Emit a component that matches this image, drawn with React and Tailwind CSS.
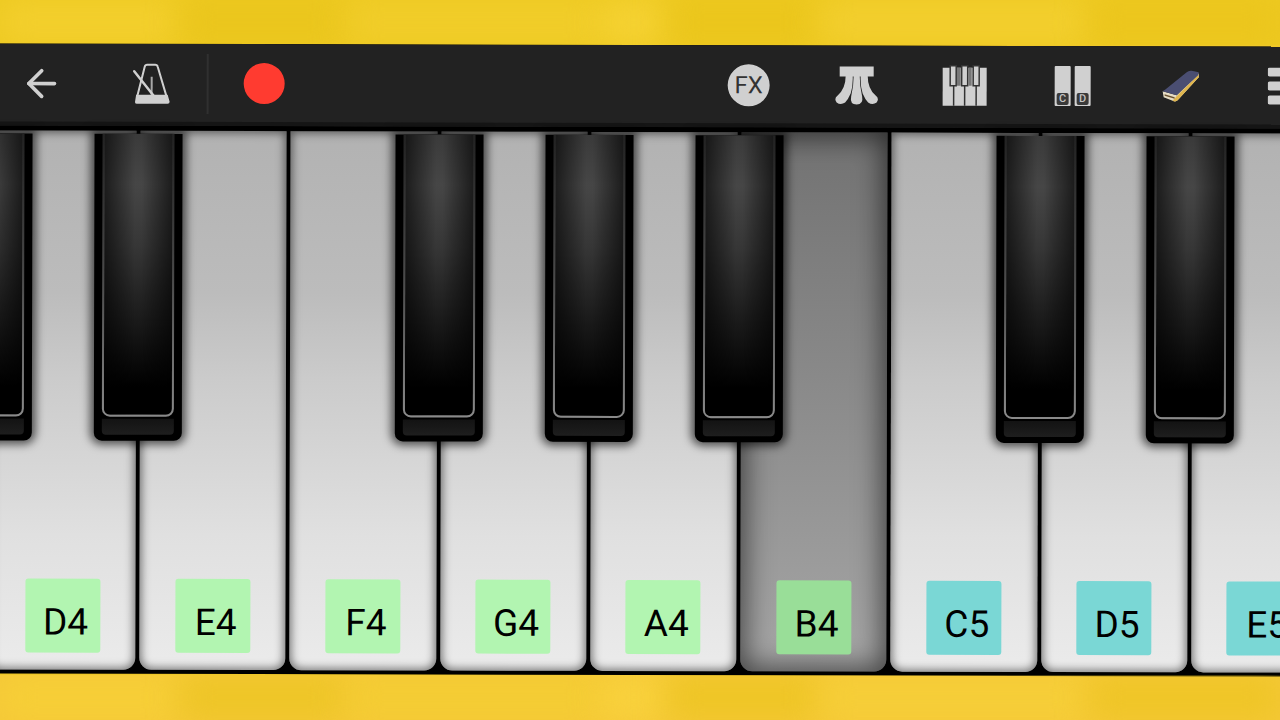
import { useState } from 'react';
import { ArrowLeft } from 'lucide-react';

const KEYS = [
  { note: 'D4', octave: 4, sharp: 'D#4' },
  { note: 'E4', octave: 4 },
  { note: 'F4', octave: 4, sharp: 'F#4' },
  { note: 'G4', octave: 4, sharp: 'G#4' },
  { note: 'A4', octave: 4, sharp: 'A#4' },
  { note: 'B4', octave: 4 },
  { note: 'C5', octave: 5, sharp: 'C#5' },
  { note: 'D5', octave: 5, sharp: 'D#5' },
  { note: 'E5', octave: 5 },
];

const MetronomeIcon = () => (
  <svg viewBox="0 0 38 42" className="h-[42px] w-[38px]" fill="none" stroke="#d0d0d0">
    <path d="M4.500 34 L12 4 Q12.500 2 14.500 2 H22.500 Q24.500 2 25 4 L34 34" strokeWidth="2" />
    <path d="M3.500 32 H35 L37 39 Q37 41 35 41 H4 Q2 41 2.400 39 Z" fill="#d0d0d0" stroke="none" />
    <path d="M19 14 V32" strokeWidth="2" stroke="#a8a8a8" />
    <path d="M1.500 8.500 L21 33" strokeWidth="2.500" strokeLinecap="round" />
  </svg>
);

const PedalIcon = () => (
  <svg viewBox="0 0 44 40" className="h-10 w-11" fill="#d0d0d0">
    <path d="M5 1 H39 V11 H5 Z" />
    <path d="M11 10 H18 Q18.500 20 16 28 Q13.500 34 10.500 37 Q6 40 2 37 Q-1 33 3 30 Q11 23 11 10 Z" />
    <path d="M33 10 H26 Q25.500 20 28 28 Q30.500 34 33.500 37 Q38 40 42 37 Q45 33 41 30 Q33 23 33 10 Z" />
    <path d="M19 10 H25 Q25 20 27.500 31 Q29 39 22 39 Q15 39 16.500 31 Q19 20 19 10 Z" />
  </svg>
);

const KeyboardIcon = () => (
  <svg viewBox="0 0 46 42" className="h-[42px] w-[46px]">
    <path fill="#d0d0d0" d="M1 3 H45 V41 H1 Z" />
    <path stroke="#333" strokeWidth="1.500" d="M12 20 V41 M23 20 V41 M34.500 20 V41" />
    <path fill="#777" d="M15 3 H19 V21 H15 Z M27 3 H30 V21 H27 Z" />
    <path
      fill="#d0d0d0"
      stroke="#333"
      strokeWidth="1.500"
      d="M8.500 1 H14.500 V21 H8.500 Z M20 1 H26 V21 H20 Z M31.500 1 H37.500 V21 H31.500 Z"
    />
  </svg>
);

const NoteNamesIcon = () => (
  <span className="flex gap-1">
    {['C', 'D'].map((letter) => (
      <span key={letter} className="flex h-10 w-4 items-end justify-center rounded-[1px] bg-[#d0d0d0] pb-px">
        <span className="flex h-3 w-3 items-center justify-center rounded-[2px] bg-[#3a3a3a] text-[11px] font-medium leading-none text-[#c4c4c4]">
          {letter}
        </span>
      </span>
    ))}
  </span>
);

const HarmonicaIcon = () => (
  <svg viewBox="0 0 40 34" className="h-[34px] w-10">
    <path fill="#e6dcc4" d="M2 22 L16 26 L38 4 L38 8 L17 31 Q15 33 12 31.500 L3 28 Z" />
    <path fill="#e0b64e" d="M16 27 L38 5 L38 8 L17 31 Q15 33 12 31.500 Z" />
    <path fill="#4a4e72" d="M2 22 L5 20 L26 3 Q28 1 31 1.500 L38 3 L37.500 6 L16 26 Z" />
    <path fill="#6a5230" d="M4 25 L14 28 L14 29.500 L4 26.500 Z" />
  </svg>
);

const MenuIcon = () => (
  <svg viewBox="0 0 42 38" className="h-[38px] w-[42px]" fill="#d0d0d0">
    <rect width="42" height="9" rx="2" />
    <rect y="14" width="42" height="9" rx="2" />
    <rect y="28" width="42" height="9" rx="2" />
  </svg>
);

const TOOLS = [
  {
    name: 'Effects',
    icon: (
      <span className="flex h-[42px] w-[42px] items-center justify-center rounded-full bg-[#d0d0d0] text-2xl leading-none text-[#333]">
        FX
      </span>
    ),
  },
  { name: 'Pedal', icon: <PedalIcon /> },
  { name: 'Keyboard', icon: <KeyboardIcon /> },
  { name: 'Note names', icon: <NoteNamesIcon /> },
  { name: 'Instrument', icon: <HarmonicaIcon /> },
  { name: 'Menu', icon: <MenuIcon /> },
];

const Toolbar = () => (
  <header className="-mx-2 flex h-[82px] shrink-0 items-center justify-between border-b-4 border-[#151515] bg-[#222] px-2 pt-px">
    <div className="flex h-full items-center">
      <button aria-label="Back" className="flex w-[82px] justify-center">
        <ArrowLeft className="h-11 w-11 text-[#d0d0d0]" strokeWidth={2} />
      </button>
      <button aria-label="Metronome" className="flex w-[124px] justify-center pl-[14px]">
        <MetronomeIcon />
      </button>
      <div className="h-15 w-[2px] bg-[#303030]"></div>
      <button aria-label="Record" className="flex w-[110px] justify-center">
        <span className="h-[41px] w-[41px] rounded-full bg-[#ff3b30]"></span>
      </button>
    </div>
    <div className="-mr-[62px] flex items-center">
      {TOOLS.map((tool) => (
        <button key={tool.name} aria-label={tool.name} className="flex w-[108px] grow justify-center">
          {tool.icon}
        </button>
      ))}
    </div>
  </header>
);

const BlackKey = ({ note, side }) => (
  <button
    aria-label={note}
    className={`absolute top-[3px] z-10 flex h-[57%] w-[88px] flex-col rounded-b-lg bg-black px-2 pb-[6px] shadow-[0_0_9px_4px_rgba(0,0,0,0.6)] ${
      side === 'left' ? 'left-0 -translate-x-1/2' : 'right-0 translate-x-1/2'
    }`}
  >
    <span className="flex w-full flex-1 rounded-b-lg bg-linear-to-b from-[#222] via-[#4a4a4a] to-[#8a8a8a] px-[2px] pb-[2px]">
      <span className="w-full rounded-b-md bg-[linear-gradient(to_right,rgba(0,0,0,0.6),transparent_45%,transparent_55%,rgba(0,0,0,0.6)),linear-gradient(to_bottom,#3a3a3a,#464646_18%,#363636_40%,#161616_70%,#000_90%)]"></span>
    </span>
    <span className="mt-[2px] h-4 w-full rounded-b-sm bg-linear-to-b from-[#131313] to-[#1e1e1e]"></span>
  </button>
);

const PianoKey = ({ note, octave, sharp, first, pressed, onPress }) => (
  <div className="relative flex flex-1 px-[2px]">
    <button
      onClick={onPress}
      aria-pressed={pressed}
      className={`flex flex-1 items-end justify-center rounded-b-xl pb-[17px] ${
        pressed
          ? 'bg-linear-to-b from-[#727272] to-[#a6a6a6] shadow-[inset_0_0_28px_4px_rgba(0,0,0,0.6)]'
          : 'bg-[linear-gradient(to_bottom,#b2b2b2,#bcbcbc_30%,#cbcbcb_46%,#e0e0e0_75%,#ebebeb)] shadow-[inset_0_0_8px_2px_rgba(0,0,0,0.5)]'
      }`}
    >
      <span
        className={`flex h-[74px] w-[75px] items-center justify-center rounded-[3px] pl-[6px] pt-3 text-[37px] leading-none text-black ${
          octave === 5 ? 'bg-[#7ad7d5]' : pressed ? 'bg-[#99de98]' : 'bg-[#b2f5b1]'
        }`}
      >
        {note}
      </span>
    </button>
    {first && <BlackKey note="C#4" side="left" />}
    {sharp && <BlackKey note={sharp} side="right" />}
  </div>
);

// Soft light spots scattered over the yellow backdrop
const SPOTS = [
  'w-[14%] bg-[#f8d436]',
  'w-[13%] bg-[#e9c41a]',
  'w-[20%] bg-[#f4d030]',
  'w-[5%] bg-[#fcd940]',
  'w-[12%] bg-[#eac418]',
  'w-[21%] bg-[#f7d338]',
  'w-[15%] bg-[#ebc41a]',
];

const Backdrop = ({ tint }) => (
  <div aria-hidden="true" className={`flex h-[45px] shrink-0 overflow-hidden ${tint}`}>
    {SPOTS.map((spot) => (
      <div key={spot} className={`h-full opacity-60 blur-lg ${spot}`}></div>
    ))}
  </div>
);

const App = () => {
  const [active, setActive] = useState('B4');

  return (
    <div className="flex h-screen min-h-[480px] flex-col overflow-hidden bg-[#f0c828] font-['Roboto','Liberation_Sans',sans-serif]">
      <Backdrop tint="bg-[#edc921]" />
      <main className="-mx-2 flex flex-1 rotate-[0.14deg] flex-col overflow-hidden bg-black px-2">
        <Toolbar />
        <section aria-label="Keyboard" className="-ml-3 -mr-15 flex flex-1 pb-1 pt-[5px]">
          {KEYS.map((key, index) => (
            <PianoKey
              key={key.note}
              {...key}
              first={index === 0}
              pressed={active === key.note}
              onPress={() => setActive(key.note)}
            />
          ))}
        </section>
      </main>
      <Backdrop tint="bg-[#f5c838]" />
    </div>
  );
};

export default App;
